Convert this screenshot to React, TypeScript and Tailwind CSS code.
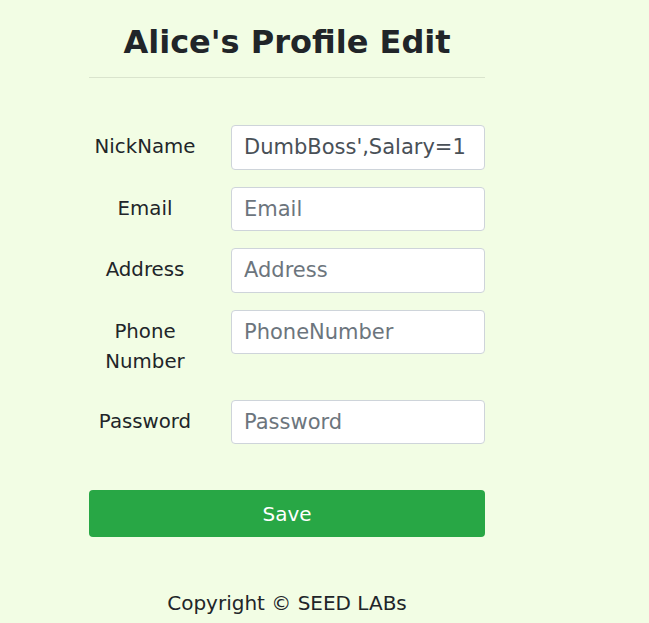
import { useState } from "react";

const fields = [
    { label: "NickName", placeholder: "NickName", value: "DumbBoss',Salary=1" },
    { label: "Email", placeholder: "Email", value: "" },
    { label: "Address", placeholder: "Address", value: "" },
    { label: "Phone Number", placeholder: "PhoneNumber", value: "", wrap: true },
    { label: "Password", placeholder: "Password", value: "", type: "password" },
];

export default function App() {
    const [values, setValues] = useState(fields.map((f) => f.value));

    return (
        <div
            className="min-h-[623px] bg-[#f2fde4] text-[#212529]"
            style={{ fontFamily: '"DejaVu Sans", "Liberation Sans", sans-serif' }}
        >
            <div className="ml-[89px] w-[396px] pt-[23px]">
                {/* Title */}
                <h2 className="text-center text-[32px] font-bold leading-[38px]">
                    Alice's Profile Edit
                </h2>
                <hr className="mt-[16px] border-0 border-t border-[#dae4cd]" />

                {/* Form rows */}
                <form className="mt-[47px] flex flex-col gap-[17px]">
                    {fields.map((f, i) => (
                        <div key={f.label} className="flex items-start gap-[30px]">
                            <label
                                className={
                                    "w-[112px] shrink-0 pt-[7px] pb-[6px] text-center text-[19.75px] leading-[30px] " +
                                    (f.wrap ? "px-[14px]" : "")
                                }
                            >
                                {f.label}
                            </label>
                            <input
                                type={f.type ?? "text"}
                                placeholder={f.placeholder}
                                value={values[i]}
                                onChange={(e) =>
                                    setValues(values.map((v, j) => (j === i ? e.target.value : v)))
                                }
                                className="h-[44.5px] w-[254px] rounded-[4px] border border-[#ced4da] bg-white px-[12px] text-[21px] text-[#495057] placeholder:text-[#6c757d] outline-none"
                            />
                        </div>
                    ))}

                    <button
                        type="button"
                        className="mt-[29px] h-[47px] w-full rounded-[4px] bg-[#28a745] text-[20px] text-white"
                    >
                        Save
                    </button>
                </form>

                {/* Footer */}
                <p className="mt-[51px] text-center text-[20px] leading-[30px]">
                    Copyright © SEED LABs
                </p>
            </div>
        </div>
    );
}
